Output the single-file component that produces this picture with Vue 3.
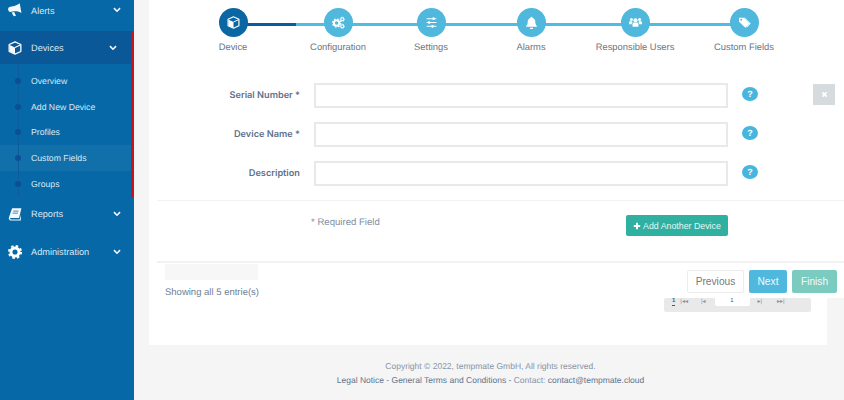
<script setup>
const gear = (x, y, s) => `<g transform="translate(${x} ${y}) scale(${s})"><circle r="6" fill="none" stroke="#fff" stroke-width="4.4"/><circle r="9" fill="none" stroke="#fff" stroke-width="3" stroke-dasharray="3.7 3.37"/></g>`

const icons = {
  alerts: '<g transform="rotate(-10 12 12)"><path d="M22 2v17c-3.500-3.400-7.500-5-12-5H5a4.500 4.500 0 0 1 0-9h5c4.500 0 8.500-1.200 12-3z"/><path d="M5.500 15h4.500l2 7H8z"/></g>',
  cube: '<path d="M12 1.500 22 6v12l-10 4.500L2 18V6z" fill="none" stroke="#fff" stroke-width="2.200" stroke-linejoin="round"/><path d="M3 7l9 4v11l-9-4z"/><path d="M12 11l9-4" stroke="#fff" stroke-width="1.800"/>',
  book: '<path d="M7 2h16l-4 17H5c-1 0-1.500 1-1.300 1.500.2.500.8.900 1.300.9h15l2-8v9.600H4.500C2.500 23 1 21 1.400 18.500z"/><path d="M9 7h9M8 10.500h9" stroke="#0668a7" stroke-width="1.300"/>',
  gear: gear(12, 12, 1.15),
  cogs: gear(8.500, 13, 0.82) + gear(19, 6, 0.46) + gear(19, 19, 0.46),
  sliders: '<path d="M3 5h18M3 12h18M3 19h18" stroke="#fff" stroke-width="2"/><rect x="14" y="2.500" width="3.500" height="5" rx="1"/><rect x="6" y="9.500" width="3.500" height="5" rx="1"/><rect x="12" y="16.500" width="3.500" height="5" rx="1"/>',
  bell: '<path d="M12 1.500a2 2 0 0 1 2 2c3.500 1 5 3.500 5 7 0 4 1 6 3 8v1.500H2V18.500c2-2 3-4 3-8 0-3.500 1.500-6 5-7a2 2 0 0 1 2-2z"/><path d="M9 21.500h6a3 3 0 0 1-6 0z"/>',
  users: '<circle cx="12" cy="8" r="3.800"/><circle cx="4.500" cy="6.500" r="2.800"/><circle cx="19.500" cy="6.500" r="2.800"/><path d="M6.500 20v-5c0-2 1.500-3 3-3h5c1.500 0 3 1 3 3v5z"/><path d="M0 15v-3c0-1.500 1-2.500 2.500-2.500h3c.5 1 1 1.700 1.700 2.200-1.500.7-2.200 2-2.200 3.300z"/><path d="M24 15v-3c0-1.500-1-2.500-2.500-2.500h-3c-.5 1-1 1.700-1.700 2.200 1.500.7 2.200 2 2.200 3.300z"/>',
  tags: '<path fill-rule="evenodd" d="M2 3h8l11 11-7.500 7.500L2 10.500zM6 5.200a1.800 1.800 0 1 0 0 3.600 1.800 1.800 0 0 0 0-3.600z"/><path d="M12.500 3l11 11-7 7-1.200-1.200 5.800-5.800L10 3z"/>'
}

const steps = [
  { label: 'Device', icon: 'cube', width: 100, active: true },
  { label: 'Configuration', icon: 'cogs', width: 110 },
  { label: 'Settings', icon: 'sliders', width: 76 },
  { label: 'Alarms', icon: 'bell', width: 124 },
  { label: 'Responsible Users', icon: 'users', width: 84 },
  { label: 'Custom Fields', icon: 'tags', width: 134 }
]
const fields = [
  { label: 'Serial Number *', removable: true },
  { label: 'Device Name *' },
  { label: 'Description' }
]
const subItems = ['Overview', 'Add New Device', 'Profiles', 'Custom Fields', 'Groups']
</script>

<template>
  <div class="page">
    <aside class="sidebar">
      <div class="nav-row alerts">
        <svg class="nav-icon" viewBox="0 0 24 24" v-html="icons.alerts"></svg>
        <span>Alerts</span>
        <svg class="chev" viewBox="0 0 10 7"><path d="M1.200 1.200 5 5l3.800-3.800" /></svg>
      </div>
      <div class="open-group">
        <div class="nav-row devices">
          <svg class="nav-icon" viewBox="0 0 24 24" v-html="icons.cube"></svg>
          <span>Devices</span>
          <svg class="chev" viewBox="0 0 10 7"><path d="M1.200 1.200 5 5l3.800-3.800" /></svg>
        </div>
        <ul class="sub">
          <li v-for="s in subItems" :key="s" :class="{ current: s === 'Custom Fields' }">
            <i class="dot"></i>{{ s }}
          </li>
        </ul>
      </div>
      <div class="nav-row reports">
        <svg class="nav-icon" viewBox="0 0 24 24" v-html="icons.book"></svg>
        <span>Reports</span>
        <svg class="chev" viewBox="0 0 10 7"><path d="M1.200 1.200 5 5l3.800-3.800" /></svg>
      </div>
      <div class="nav-row admin">
        <svg class="nav-icon" viewBox="0 0 24 24" v-html="icons.gear"></svg>
        <span>Administration</span>
        <svg class="chev" viewBox="0 0 10 7"><path d="M1.200 1.200 5 5l3.800-3.800" /></svg>
      </div>
    </aside>

    <main class="main">
      <section class="card">
        <div class="wizard">
          <div class="steps">
            <div class="track"><div class="track-done"></div></div>
            <div
              v-for="s in steps"
              :key="s.label"
              class="step"
              :class="{ active: s.active }"
              :style="{ width: s.width + 'px' }"
            >
              <div class="circle">
                <svg viewBox="0 0 24 24" v-html="icons[s.icon]"></svg>
              </div>
              <div class="step-label">{{ s.label }}</div>
            </div>
          </div>

          <form class="form">
            <div v-for="f in fields" :key="f.label" class="field">
              <label>{{ f.label }}</label>
              <input type="text" />
              <span class="help">?</span>
              <button v-if="f.removable" type="button" class="remove">
                <svg viewBox="0 0 10 10"><path d="M2 2l6 6M8 2l-6 6" /></svg>
              </button>
            </div>
          </form>

          <div class="add-row">
            <span class="required">* Required Field</span>
            <button type="button" class="add-btn">
              <svg viewBox="0 0 10 10"><path d="M5 1v8M1 5h8" /></svg>Add Another Device
            </button>
          </div>

          <div class="wizard-foot">
            <div class="entries">
              <div class="entries-box"></div>
              <div class="entries-text">Showing all 5 entrie(s)</div>
            </div>
            <div class="buttons">
              <button type="button" class="btn prev">Previous</button>
              <button type="button" class="btn next">Next</button>
              <button type="button" class="btn finish">Finish</button>
            </div>
          </div>
        </div>

        <div class="pager">
          <b class="pg-user">1</b>
          <span class="pg-a">|◂◂</span>
          <span class="pg-b">|◂</span>
          <span class="pg-tab">1</span>
          <span class="pg-c">▸|</span>
          <span class="pg-d">▸▸|</span>
        </div>
      </section>

      <footer class="footer">
        <div class="copy">Copyright © 2022, tempmate GmbH, All rights reserved.</div>
        <div class="links">Legal Notice - General Terms and Conditions - <span class="contact">Contact: </span>contact@tempmate.cloud</div>
      </footer>
    </main>
  </div>
</template>

<style>
html, body { margin: 0; background: #f5f5f6; }
</style>

<style scoped>
.page {
  display: flex;
  width: 844px;
  height: 400px;
  overflow: hidden;
  font-family: "Liberation Sans", Arial, sans-serif;
  background: #f5f5f6;
  text-rendering: geometricPrecision;
}
.sidebar {
  width: 134px;
  flex: none;
  background: #0668a7;
  color: #dbe9f3;
  font-size: 9.200px;
}
.nav-row {
  display: flex;
  align-items: center;
  box-sizing: border-box;
  padding-left: 8px;
  padding-right: 13px;
}
.nav-row span { flex: 1; margin-left: 9px; padding-top: 1px; }
.nav-icon { width: 14px; height: 14px; fill: #f4f8fb; flex: none; }
.chev { width: 8px; height: 6px; fill: none; stroke: #f4f8fb; stroke-width: 2; flex: none; }
.alerts { height: 31px; padding-bottom: 11px; }
.open-group { border-right: 3px solid #c4161c; }
.devices { height: 33px; background: #0a5897; padding-right: 14px; }
.reports { height: 36px; padding-bottom: 2px; }
.admin { height: 38px; }
.sub {
  list-style: none;
  margin: 0;
  padding: 4px 0 0;
  position: relative;
  font-size: 8.700px;
}
.sub::before {
  content: "";
  position: absolute;
  left: 17.500px;
  top: 0;
  bottom: 0;
  width: 1px;
  background: #0d5d9e;
}
.sub li {
  display: flex;
  align-items: center;
  height: 25.800px;
  padding-left: 15px;
}
.sub li.current { background: #1170aa; }
.dot {
  position: relative;
  width: 6px;
  height: 6px;
  border-radius: 50%;
  background: #0c4f95;
  margin-right: 10px;
}

.main { flex: 1; min-width: 0; padding: 0 17px 0 15px; }
.card { height: 345px; background: #fff; }
.wizard { width: 695px; height: 298px; background: #fff; }

.steps {
  position: relative;
  display: flex;
  height: 83px;
  margin-left: 34px;
  padding-top: 8px;
  box-sizing: border-box;
}
.track {
  position: absolute;
  left: 50px;
  top: 23px;
  width: 511px;
  height: 3px;
  background: #4dbde6;
}
.track-done { width: 63px; height: 100%; background: #0a5ba0; }
.step { position: relative; display: flex; flex-direction: column; align-items: center; white-space: nowrap; }
.circle {
  display: flex;
  align-items: center;
  justify-content: center;
  width: 29px;
  height: 29px;
  border-radius: 50%;
  background: #4fb8dc;
}
.circle svg { width: 13px; height: 13px; fill: #fff; }
.step.active .circle { background: #0a67a3; }
.step-label { margin-top: 4px; font-size: 9.400px; line-height: 12px; color: #6d7580; }

.form { display: flex; flex-direction: column; gap: 14px; }
.field { display: flex; align-items: center; height: 25px; }
.field label {
  width: 151px;
  text-align: right;
  font-family: Inter, "Liberation Sans", sans-serif;
  font-size: 9.200px;
  font-weight: 600;
  color: #5f708b;
}
.field input {
  box-sizing: border-box;
  width: 414px;
  height: 25px;
  margin-left: 14px;
  border: 2px solid #e7e9ea;
  background: #fff;
  padding: 0;
  outline: none;
}
.help {
  display: flex;
  align-items: center;
  justify-content: center;
  width: 16px;
  height: 14px;
  margin: -3px 0 0 14px;
  border-radius: 50%;
  background: #46b6de;
  color: #fff;
  font-size: 9px;
  font-weight: 700;
}
.remove {
  display: flex;
  align-items: center;
  justify-content: center;
  width: 22px;
  height: 21px;
  margin: -3px 0 0 55px;
  padding: 0;
  border: 0;
  background: #d6dbde;
}
.remove svg { width: 7px; height: 7px; fill: none; stroke: #fff; stroke-width: 2.400; }

.add-row {
  display: flex;
  box-sizing: border-box;
  height: 63px;
  margin: 14px 0 0 8px;
  padding: 14px 0 0 154px;
  border-top: 1px solid #f2f2f3;
  border-bottom: 2px solid #f2f2f3;
}
.required { width: 315px; padding-top: 1px; font-size: 9.600px; line-height: 14px; color: #8290a3; }
.add-btn {
  display: flex;
  align-items: center;
  justify-content: center;
  width: 102px;
  height: 21px;
  padding: 0;
  border: 0;
  border-radius: 2px;
  background: #2fb0a0;
  color: #e9f7f5;
  font: 8.800px "Liberation Sans", Arial, sans-serif;
}
.add-btn svg { width: 8px; height: 8px; margin-right: 2px; fill: none; stroke: #fff; stroke-width: 2.400; }

.wizard-foot { display: flex; justify-content: space-between; padding-left: 16px; padding-right: 7px; }
.entries { width: 96px; padding-top: 1px; overflow: hidden; }
.entries-box { width: 93px; height: 16px; background: #f7f7f7; }
.entries-text { margin-top: 7px; font-size: 9.500px; line-height: 12px; color: #6f7f92; white-space: nowrap; }
.buttons { display: flex; gap: 5px; padding-top: 7px; }
.btn {
  height: 23px;
  padding: 0;
  border: 0;
  border-radius: 2px;
  font: 10.200px "Liberation Sans", Arial, sans-serif;
  color: #f1f9fb;
}
.prev { width: 57px; background: #fff; border: 1px solid #ececec; color: #75797e; }
.next { width: 38px; background: #50b8dd; }
.finish { width: 45px; background: #7ccbc0; }

.pager {
  display: flex;
  align-items: flex-start;
  width: 147px;
  height: 14px;
  margin-left: 515px;
  border-radius: 2px;
  background: #e9e9ea;
  font-size: 6px;
  line-height: 9px;
  color: #8a8f96;
  white-space: nowrap;
}
.pg-user { margin-left: 8px; color: #2a5c9c; border-bottom: 1px solid #2a5c9c; height: 7px; line-height: 7px; }
.pg-a { margin-left: 5px; }
.pg-b { margin-left: 13px; }
.pg-tab {
  width: 35px;
  height: 13px;
  margin: -5px 0 0 9px;
  border-radius: 0 0 2px 2px;
  background: #fff;
  text-align: center;
  line-height: 16px;
  color: #555;
}
.pg-c { margin-left: 8px; }
.pg-d { margin-left: 15px; }

.footer { padding-top: 14px; margin-left: 5px; text-align: center; font-size: 8.500px; line-height: 14px; color: #63748c; }
.copy, .contact { color: #8894a5; }
</style>
